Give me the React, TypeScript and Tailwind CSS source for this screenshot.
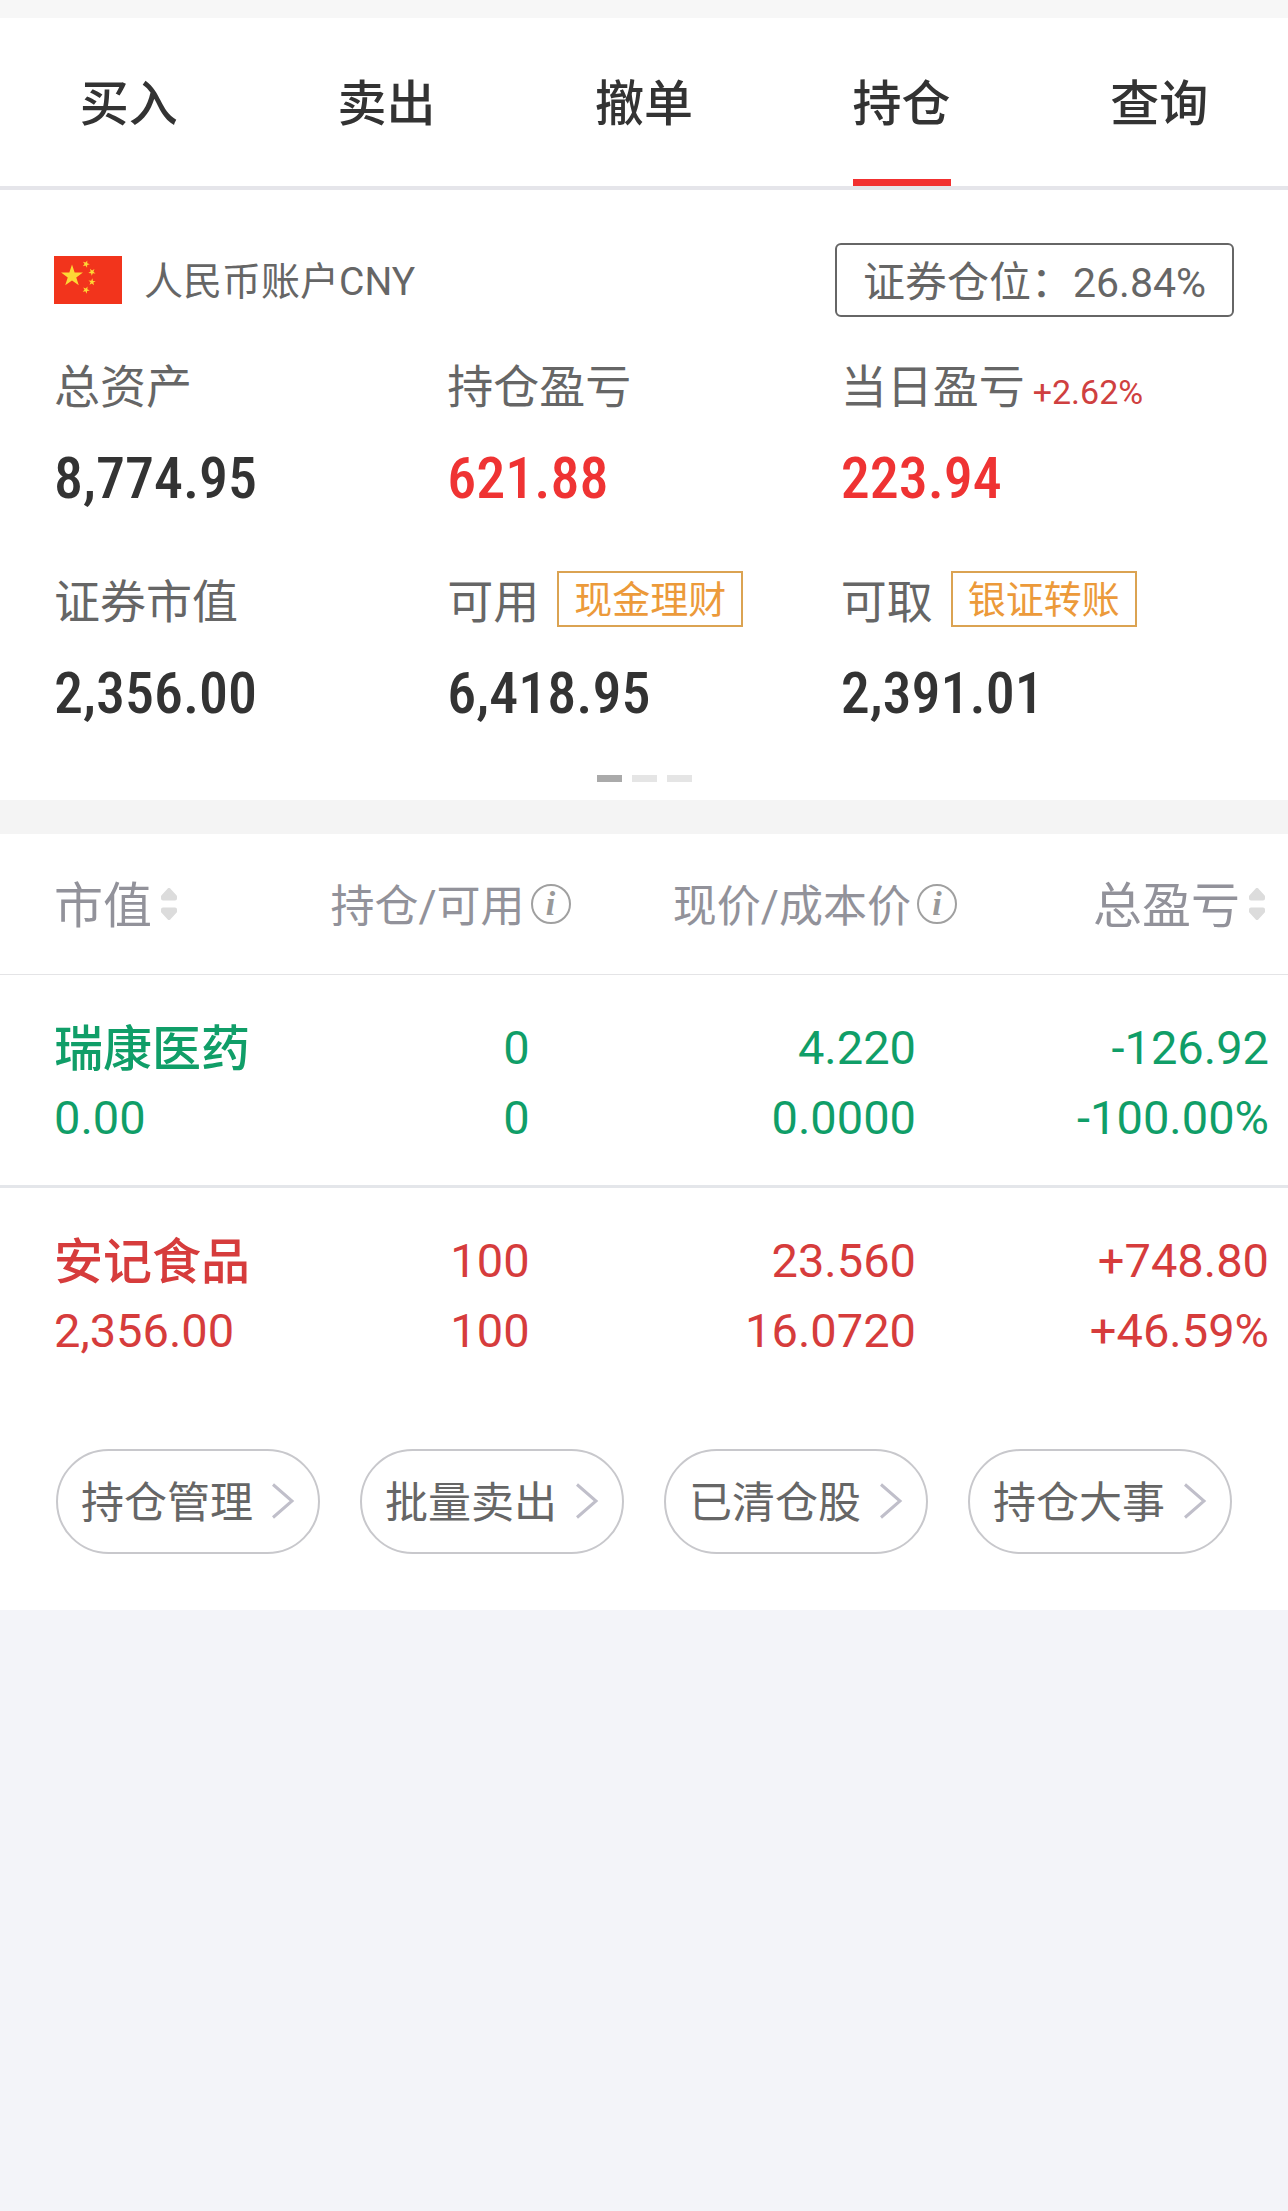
import { useState } from "react";

const TABS = ["买入", "卖出", "撤单", "持仓", "查询"];

type Stat = {
  label: string;
  value: string;
  rising?: boolean;
  change?: string;
  action?: string;
};

const STATS: Stat[] = [
  { label: "总资产", value: "8,774.95" },
  { label: "持仓盈亏", value: "621.88", rising: true },
  { label: "当日盈亏", value: "223.94", rising: true, change: "+2.62%" },
  { label: "证券市值", value: "2,356.00" },
  { label: "可用", value: "6,418.95", action: "现金理财" },
  { label: "可取", value: "2,391.01", action: "银证转账" },
];

type Holding = {
  name: string;
  marketValue: string;
  held: string;
  available: string;
  price: string;
  cost: string;
  profit: string;
  profitRate: string;
  rising: boolean;
};

const HOLDINGS: Holding[] = [
  {
    name: "瑞康医药",
    marketValue: "0.00",
    held: "0",
    available: "0",
    price: "4.220",
    cost: "0.0000",
    profit: "-126.92",
    profitRate: "-100.00%",
    rising: false,
  },
  {
    name: "安记食品",
    marketValue: "2,356.00",
    held: "100",
    available: "100",
    price: "23.560",
    cost: "16.0720",
    profit: "+748.80",
    profitRate: "+46.59%",
    rising: true,
  },
];

const SHORTCUTS = ["持仓管理", "批量卖出", "已清仓股", "持仓大事"];

const STAR = "0,-10 2.3,-3.1 9.5,-3.1 3.7,1.2 5.9,8.1 0,3.9 -5.9,8.1 -3.7,1.2 -9.5,-3.1 -2.3,-3.1";

function Flag() {
  return (
    <svg className="h-12 w-[68px] shrink-0" viewBox="0 0 68 48" aria-hidden="true">
      <rect width="68" height="48" fill="#f2341c" />
      <g fill="#fdd835">
        <polygon points={STAR} transform="translate(18 20) scale(1.15)" />
        <polygon points={STAR} transform="translate(32 8) rotate(20) scale(0.38)" />
        <polygon points={STAR} transform="translate(38 16) rotate(40) scale(0.38)" />
        <polygon points={STAR} transform="translate(38 26) rotate(5) scale(0.38)" />
        <polygon points={STAR} transform="translate(32 34) rotate(25) scale(0.38)" />
      </g>
    </svg>
  );
}

function SortIcon() {
  return (
    <svg className="h-8 w-[18px] shrink-0" viewBox="0 0 18 32" aria-hidden="true">
      <g fill="#dcdcdc" stroke="#dcdcdc" strokeWidth="4" strokeLinejoin="round">
        <path d="M9 2 L15 8.500 V10.500 H3 V8.500 Z" />
        <path d="M9 30 L15 23.500 V21.500 H3 V23.500 Z" />
      </g>
    </svg>
  );
}

function InfoButton({ label }: { label: string }) {
  return (
    <button
      type="button"
      aria-label={label}
      className="flex size-10 shrink-0 items-center justify-center rounded-full border-2 border-[#a0a0a0] font-['Liberation_Serif',serif] text-[34px] leading-none font-bold text-[#999999] italic"
    >
      i
    </button>
  );
}

function Chevron() {
  return (
    <svg className="h-9 w-6 shrink-0" viewBox="0 0 24 36" fill="none" aria-hidden="true">
      <path d="M2 1.500 L21 18 L2 34.500" stroke="#c0bfca" strokeWidth="3" />
    </svg>
  );
}

export default function App() {
  const [active, setActive] = useState("持仓");

  return (
    <div className="min-h-screen bg-[#f3f4f9] font-[Roboto,'Noto_Sans_CJK_SC',sans-serif] text-[#333333]">
      <div className="h-[18px] bg-[#f7f7f7]" />

      <nav className="grid grid-cols-5 border-b-4 border-[#e5e5ea] bg-white">
        {TABS.map((tab) => (
          <div key={tab} className="flex justify-center">
            <button
              type="button"
              onClick={() => setActive(tab)}
              aria-current={tab === active ? "page" : undefined}
              className={
                tab === active
                  ? "border-b-[7px] border-[#f23030] pt-[57px] pb-11 text-[49px] leading-[60px] font-medium"
                  : "border-b-[7px] border-transparent pt-[57px] pb-11 text-[49px] leading-[60px] font-medium"
              }
            >
              {tab}
            </button>
          </div>
        ))}
      </nav>

      <main>
        <section className="bg-white px-[54px] pt-[53px] pb-[18px]">
          <div className="flex items-center justify-between">
            <div className="flex items-center gap-[22px]">
              <Flag />
              <h1 className="pt-1 text-[39px] leading-[60px] text-[#666666]">人民币账户CNY</h1>
            </div>
            <div className="flex items-center rounded-md border-2 border-[#666666] px-[26px] pt-2 pb-0.5 text-[42px] leading-[60px] text-[#666666]">
              <span>证券仓位：</span>
              <span className="text-[41px]">26.84%</span>
            </div>
          </div>

          <dl className="mt-[39px] grid grid-cols-3 gap-y-[61px]">
            {STATS.map((s) => (
              <div key={s.label} className="flex flex-col gap-[30px]">
                <dt className="flex h-[60px] items-center text-[46px] leading-[60px] text-[#666666]">
                  <span className="pt-0.5">{s.label}</span>
                  {s.change && (
                    <span className="ml-2 pt-3 text-[34px] text-[#cf4040]">{s.change}</span>
                  )}
                  {s.action && (
                    <button
                      type="button"
                      className="mb-1 ml-[18px] border-2 border-[#dba352] px-[15px] pt-0.5 text-[38px] leading-[50px] text-[#ec9a3a]"
                    >
                      {s.action}
                    </button>
                  )}
                </dt>
                <dd
                  className={
                    s.rising
                      ? "font-['Roboto_Condensed',Roboto,sans-serif] text-[58px] leading-[64px] font-medium text-[#ef3333]"
                      : "font-['Roboto_Condensed',Roboto,sans-serif] text-[58px] leading-[64px] font-medium"
                  }
                >
                  {s.value}
                </dd>
              </div>
            ))}
          </dl>

          <div className="mt-[50px] flex justify-center gap-2.5">
            <span className="h-[7px] w-[25px] bg-[#aaaaaa]" />
            <span className="h-[7px] w-[25px] bg-[#e5e5e5]" />
            <span className="h-[7px] w-[25px] bg-[#e5e5e5]" />
          </div>
        </section>

        <section className="border-t-[34px] border-[#f4f4f4] bg-white">
          <table className="w-full table-fixed border-collapse">
            <colgroup>
              <col className="w-[22%]" />
              <col className="w-[22.3%]" />
              <col className="w-[30%]" />
              <col />
            </colgroup>
            <thead>
              <tr className="h-[140px] border-b border-[#e4e4e6] text-[44px] leading-[60px] text-[#92929a]">
                <th scope="col" className="pl-[54px] font-normal">
                  <button type="button" className="flex items-center gap-2 text-[49px]">
                    <span className="pt-1.5">市值</span>
                    <SortIcon />
                  </button>
                </th>
                <th scope="col" className="font-normal">
                  <div className="flex items-center justify-end gap-1.5 whitespace-nowrap">
                    <span className="pt-1.5">持仓/可用</span>
                    <InfoButton label="持仓/可用说明" />
                  </div>
                </th>
                <th scope="col" className="font-normal">
                  <div className="flex items-center justify-end gap-1.5 whitespace-nowrap">
                    <span className="pt-1.5">现价/成本价</span>
                    <InfoButton label="现价/成本价说明" />
                  </div>
                </th>
                <th scope="col" className="pr-[22px] font-normal">
                  <button type="button" className="ml-auto flex items-center gap-2 text-[49px]">
                    <span className="pt-1.5">总盈亏</span>
                    <SortIcon />
                  </button>
                </th>
              </tr>
            </thead>
            <tbody>
              {HOLDINGS.map((h) => (
                <tr
                  key={h.name}
                  className={
                    h.rising
                      ? "border-b-3 border-[#e4e6ea] text-right text-[47px] leading-[70px] text-[#d63c3c] last:border-b-0"
                      : "border-b-3 border-[#e4e6ea] text-right text-[47px] leading-[70px] text-[#109e68] last:border-b-0"
                  }
                >
                  <th scope="row" className="pt-[38px] pb-8 pl-[54px] text-left font-normal whitespace-nowrap">
                    <div className="h-[70px] pt-0.5 text-[49px] font-medium">{h.name}</div>
                    <div>{h.marketValue}</div>
                  </th>
                  <td className="pt-[38px] pr-[41px] pb-8">
                    <div>{h.held}</div>
                    <div>{h.available}</div>
                  </td>
                  <td className="pt-[38px] pr-[41px] pb-8">
                    <div>{h.price}</div>
                    <div>{h.cost}</div>
                  </td>
                  <td className="pt-[38px] pr-[19px] pb-8">
                    <div>{h.profit}</div>
                    <div>{h.profitRate}</div>
                  </td>
                </tr>
              ))}
            </tbody>
          </table>

          <div className="grid grid-cols-4 gap-10 px-14 pt-[51px] pb-14">
            {SHORTCUTS.map((s) => (
              <button
                key={s}
                type="button"
                className="flex items-center justify-center gap-[18px] rounded-full border-2 border-[#c8c8cc] py-5 text-[43px] leading-[57px] whitespace-nowrap text-[#666666]"
              >
                <span className="pt-1">{s}</span>
                <Chevron />
              </button>
            ))}
          </div>
        </section>
      </main>
    </div>
  );
}
